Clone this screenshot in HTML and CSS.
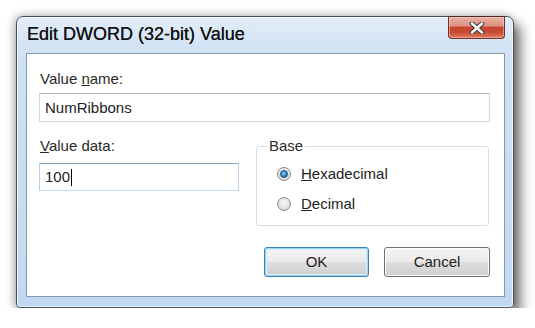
FILE: index.html
```html
<!DOCTYPE html>
<html>
<head>
	<meta charset="utf-8">
	<title>Edit DWORD (32-bit) Value</title>
	<link rel="stylesheet" href="styles.css">
</head>
<body>

<div class="window">
	<div class="titlebar">
		<div class="title">Edit DWORD (32-bit) Value</div>
		<div class="close">
			<svg width="16" height="12" viewBox="0 0 16 12">
				<path d="M3 1.5 L13 10.5 M13 1.5 L3 10.5" stroke="#3b3b3b" stroke-width="4.6" stroke-linecap="round"/>
				<path d="M3 1.5 L13 10.5 M13 1.5 L3 10.5" stroke="#f4f4f4" stroke-width="2.6" stroke-linecap="round"/>
			</svg>
		</div>
	</div>

	<div class="client">
		<div class="lbl">Value <u>n</u>ame:</div>
		<div class="field full">NumRibbons</div>

		<div class="row">
			<div class="col">
				<div class="lbl"><u>V</u>alue data:</div>
				<div class="field focus">100<span class="caret"></span></div>
			</div>
			<fieldset class="group">
				<legend>Base</legend>
				<div class="radio"><span class="dot on"></span><span><u>H</u>exadecimal</span></div>
				<div class="radio"><span class="dot"></span><span><u>D</u>ecimal</span></div>
			</fieldset>
		</div>

		<div class="buttons">
			<div class="btn default">OK</div>
			<div class="btn">Cancel</div>
		</div>
	</div>
</div>

</body>
</html>
```

FILE: styles.css
```css
body {
	margin: 0;
	background: white;
	font-family: 'Liberation Sans', Arial, sans-serif;
	color: #222;
}

.window {
	margin: 16px 0 0 16px;
	width: 498px;
	height: 292px;
	box-sizing: border-box;
	border: 1px solid #47515c;
	border-radius: 7px 7px 4px 4px;
	background: linear-gradient(to bottom, #e2edf8 0%, #d0e2f4 12%, #c0d9f1 100%);
	box-shadow: inset 0 0 0 1px #eef6fd, 6px 8px 13px rgba(0,0,0,.6), -2px -1px 8px rgba(0,0,0,.25);
	display: flex;
	flex-direction: column;
}

.titlebar {
	height: 36px;
	display: flex;
	justify-content: space-between;
	align-items: flex-start;
	padding: 0 8px 0 10px;
}
.title {
	font-size: 18px;
	line-height: 20px;
	padding-top: 7px;
	color: #141414;
	text-shadow: 0 0 0.4px #141414;
}
.close {
	margin-top: -1px;
	width: 57px;
	height: 23px;
	box-sizing: border-box;
	border: 1px solid #6b3228;
	border-top-color: #4a2a26;
	border-radius: 0 0 4px 4px;
	background: linear-gradient(to bottom, #e9b1a4 0%, #de9181 42%, #c8452f 50%, #c84a33 72%, #e07d61 100%);
	box-shadow: inset 0 0 0 1px rgba(255,220,210,.45);
	display: flex;
	justify-content: center;
	align-items: center;
}

.client {
	height: 244px;
	margin: 0 8px 0 9px;
	box-sizing: border-box;
	border: 1px solid #8797a8;
	background: white;
	padding: 16px 14px 0 12px;
	font-size: 15px;
	line-height: 18px;
}

.lbl {
	padding-left: 1px;
	color: #2a2a2a;
}

.field {
	height: 29px;
	box-sizing: border-box;
	border: 1px solid #d3d7dd;
	border-top-color: #b5b9c0;
	padding-left: 5px;
	display: flex;
	align-items: center;
	color: #222;
}
.field.full {
	margin-top: 5px;
}
.field.focus {
	width: 200px;
	height: 28px;
	margin-top: 8px;
	border-color: #7ea4cc #b9d0e8 #c8dcee #b9d0e8;
}
.caret {
	width: 1px;
	height: 17px;
	background: #000;
	margin-left: 1px;
}

.row {
	display: flex;
	gap: 17px;
	margin-top: 15px;
}
.col {
	width: 200px;
}

.group {
	margin: 0;
	width: 233px;
	height: 89px;
	box-sizing: border-box;
	border: 1px solid #d5dde4;
	border-radius: 3px;
	padding: 4px 0 0 20px;
	min-inline-size: 0;
}
.group legend {
	padding: 0 2px;
	margin-left: -10px;
	color: #2a2a2a;
}

.radio {
	display: flex;
	align-items: center;
	gap: 10px;
	height: 30px;
}
.dot {
	width: 14px;
	height: 14px;
	box-sizing: border-box;
	border-radius: 50%;
	border: 1px solid #8a8c8f;
	background: radial-gradient(circle at 50% 40%, #fafafa 0%, #e2e2e2 55%, #c8c8c8 100%);
	display: flex;
	justify-content: center;
	align-items: center;
}
.dot.on::after {
	content: "";
	width: 6px;
	height: 6px;
	border-radius: 50%;
	background: radial-gradient(circle at 45% 40%, #8fd0f5 0%, #2a78b8 60%, #134f86 100%);
	border: 1px solid #1d4f7c;
}

.buttons {
	display: flex;
	justify-content: flex-end;
	gap: 15px;
	margin-top: 21px;
}
.btn {
	width: 106px;
	height: 30px;
	box-sizing: border-box;
	border: 1px solid #707070;
	border-radius: 3px;
	background: linear-gradient(to bottom, #f4f4f4 0%, #ebebeb 48%, #dddddd 52%, #cfcfcf 100%);
	box-shadow: inset 0 0 0 1px #fbfbfb;
	display: flex;
	justify-content: center;
	align-items: center;
	color: #1e1e1e;
}
.btn.default {
	width: 105px;
	border-color: #3c7fb1;
	box-shadow: inset 0 0 0 1px #9ed7f5, inset 0 0 0 2px #d6eefa;
}
```
